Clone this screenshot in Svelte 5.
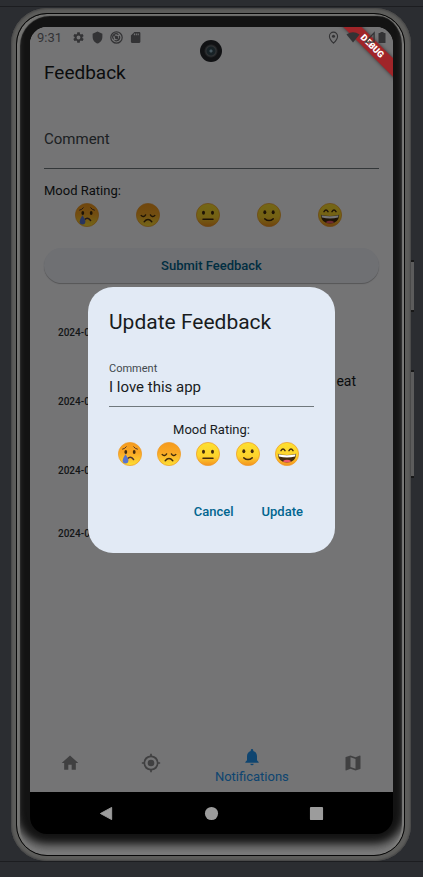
<script>
  const moods = ['crying', 'disappointed', 'neutral', 'smiling', 'grinning'];
  const entries = [
    { date: '2024-0', text: '' },
    { date: '2024-0', text: 'eat' },
    { date: '2024-0', text: '' },
    { date: '2024-0', text: '' }
  ];
  let draft = $state('');
  let comment = $state('I love this app');
</script>

<svelte:head><title>Feedback</title></svelte:head>

{#snippet face(mood, id)}
  <svg class="face" viewBox="0 0 24 24" aria-hidden="true">
    <defs>
      <linearGradient id={id} x1="0" y1="0" x2="0" y2="1">
        {#if mood === 'crying' || mood === 'disappointed'}
          <stop offset="0" stop-color="#f59a1c" />
          <stop offset=".45" stop-color="#f9a825" />
          <stop offset="1" stop-color="#fde034" />
        {:else}
          <stop offset="0" stop-color="#fde030" />
          <stop offset=".6" stop-color="#fdd32c" />
          <stop offset="1" stop-color="#f4921f" />
        {/if}
      </linearGradient>
    </defs>
    <circle cx="12" cy="12" r="11.6" fill="url(#{id})" stroke="#ee9a28" stroke-width=".7" />
    {#if mood === 'crying'}
      <g fill="none" stroke="#4e342e" stroke-linecap="round">
        <path d="M4.6 7.2Q7 6.8 8.3 4.8M15.7 4.8Q17 6.8 19.4 7.2" stroke-width="1" />
        <path d="M8.8 17.6Q12 13.2 15.6 17.4" stroke-width="1.5" />
      </g>
      <ellipse cx="7.8" cy="10" rx="1.4" ry="1.9" fill="#422b0d" />
      <ellipse cx="16.2" cy="10" rx="1.4" ry="1.9" fill="#422b0d" />
      <path d="M7.4 12.2Q10.5 16.5 10.4 18.6A2.9 2.9 0 0 1 4.6 18.6Q4.7 16.5 7.4 12.2Z" fill="#5874ce" />
    {:else if mood === 'disappointed'}
      <g fill="none" stroke="#422b0d" stroke-width="1.4" stroke-linecap="round">
        <path d="M5.2 12.5Q8 14.8 9.6 11.9M14.4 11.9Q16 14.8 18.8 12.5" />
        <path d="M8.2 18.7Q12 14.3 15.8 18.7" />
      </g>
    {:else if mood === 'neutral'}
      <ellipse cx="7.5" cy="9.7" rx="1.5" ry="2" fill="#422b0d" />
      <ellipse cx="16.5" cy="9.7" rx="1.5" ry="2" fill="#422b0d" />
      <path d="M7 16.2H17" stroke="#422b0d" stroke-width="1.5" stroke-linecap="round" />
    {:else if mood === 'smiling'}
      <ellipse cx="7.8" cy="9.3" rx="1.5" ry="2" fill="#422b0d" />
      <ellipse cx="16.2" cy="9.3" rx="1.5" ry="2" fill="#422b0d" />
      <path d="M7.8 15.8Q12 19.3 16.2 15.8" fill="none" stroke="#422b0d" stroke-width="1.5" stroke-linecap="round" />
    {:else}
      <path d="M6 8.6Q8 5.6 10 8.6M14 8.6Q16 5.6 18 8.6" fill="none" stroke="#422b0d" stroke-width="1.5" stroke-linecap="round" />
      <path d="M2.8 11.8Q12 14.2 21.2 11.8Q20.5 20.6 12 20.6T2.8 11.8Z" fill="#422b0d" />
      <path d="M3.4 12.3Q12 14.4 20.6 12.3L20 14.6Q12 16.6 4 14.6Z" fill="#fff" />
      <path d="M7.5 19.2Q12 16.3 16.5 19.2Q12 21.7 7.5 19.2Z" fill="#ed5a6b" />
    {/if}
  </svg>
{/snippet}

{#snippet moodRow(prefix)}
  <div class="moods">
    {#each moods as mood}
      <button type="button" class="mood" aria-label={mood}>{@render face(mood, `${prefix}-${mood}`)}</button>
    {/each}
  </div>
{/snippet}

<div class="desk">
  <div class="phone">
    <span class="key power"></span>
    <span class="key volume"></span>
    <div class="rim">
      <div class="screen">
        <div class="app">
          <header class="status">
            <span class="time">9:31</span>
            <svg viewBox="0 0 24 24"><path d="M19.14 12.94a7 7 0 0 0 0-1.88l2.03-1.58a.5.5 0 0 0 .12-.61l-1.92-3.32a.5.5 0 0 0-.59-.22l-2.39.96a7 7 0 0 0-1.62-.94L14.4 2.81A.48.48 0 0 0 13.93 2.4h-3.84a.48.48 0 0 0-.47.41l-.36 2.54a7 7 0 0 0-1.62.94l-2.39-.96a.5.5 0 0 0-.59.22L2.74 8.87a.48.48 0 0 0 .12.61l2.03 1.58a7 7 0 0 0 0 1.88l-2.03 1.58a.5.5 0 0 0-.12.61l1.92 3.32c.12.22.37.29.59.22l2.39-.96a7 7 0 0 0 1.62.94l.36 2.54c.05.24.24.41.48.41h3.84c.24 0 .44-.17.47-.41l.36-2.54a7 7 0 0 0 1.62-.94l2.39.96c.22.08.47 0 .59-.22l1.92-3.32a.48.48 0 0 0-.12-.61ZM12 15.6A3.6 3.6 0 1 1 12 8.4a3.6 3.6 0 0 1 0 7.2Z" /></svg>
            <svg viewBox="0 0 24 24"><path d="M12 1 3 5v6c0 5.55 3.84 10.74 9 12 5.16-1.26 9-6.45 9-12V5Z" /></svg>
            <svg viewBox="0 0 24 24"><g fill="none" stroke="currentColor" stroke-width="2.2"><circle cx="12" cy="12" r="10.5" /><path d="M7 15.5A6 6 0 0 1 15.5 7M17 9a6 6 0 0 1-8.5 8M8 8l9 9" /><circle cx="12" cy="12" r="2" /></g></svg>
            <svg viewBox="0 0 24 24"><path d="M19 2H10L3.5 8.5V20a2 2 0 0 0 2 2H19a2 2 0 0 0 2-2V4a2 2 0 0 0-2-2Zm-8 6H9V4.5h2Zm3.5 0h-2V4.5h2ZM18 8h-2V4.5h2Z" /></svg>
            <span class="spacer"></span>
            <svg viewBox="0 0 24 24"><path d="M12 2a7.5 7.5 0 0 0-7.5 7.5C4.5 15 12 22.5 12 22.5S19.5 15 19.5 9.5A7.5 7.5 0 0 0 12 2Z" fill="none" stroke="currentColor" stroke-width="2" /><circle cx="12" cy="9.5" r="2.8" /></svg>
            <svg class="wifi" viewBox="0 0 28 24"><path d="M14 22 1 6Q14-3 27 6Z" /></svg>
            <svg class="signal" viewBox="0 0 24 24"><path d="M20.5 3.5v17h-16Z" fill="none" stroke="currentColor" stroke-width="2.4" /></svg>
            <svg class="battery" viewBox="0 0 16 24"><path d="M5 1h6v2h3a1 1 0 0 1 1 1v18a1 1 0 0 1-1 1H2a1 1 0 0 1-1-1V4a1 1 0 0 1 1-1h3Z" /></svg>
          </header>

          <h1>Feedback</h1>

          <main>
            <input class="comment" type="text" placeholder="Comment" aria-label="Comment" bind:value={draft} />
            <p class="caption">Mood Rating:</p>
            {@render moodRow('page')}
            <button type="button" class="submit">Submit Feedback</button>
            <ul>
              {#each entries as entry}
                <li><span>{entry.date}</span><b>{entry.text}</b></li>
              {/each}
            </ul>
          </main>

          <nav class="tabs">
            <button type="button" aria-label="Home"><svg viewBox="0 0 24 24"><path d="M10 20v-6h4v6h5v-8h3L12 3 2 12h3v8Z" /></svg></button>
            <button type="button" aria-label="Location"><svg viewBox="0 0 24 24"><path d="M12 8a4 4 0 1 0 0 8 4 4 0 0 0 0-8Zm8.94 3A9 9 0 0 0 13 3.06V1h-2v2.06A9 9 0 0 0 3.06 11H1v2h2.06A9 9 0 0 0 11 20.94V23h2v-2.06A9 9 0 0 0 20.94 13H23v-2ZM12 19a7 7 0 1 1 0-14 7 7 0 0 1 0 14Z" /></svg></button>
            <button type="button" class="active"><svg viewBox="0 0 24 24"><path d="M12 22a2 2 0 0 0 2-2h-4a2 2 0 0 0 2 2Zm6-6v-5c0-3.07-1.64-5.64-4.5-6.32V4a1.5 1.5 0 0 0-3 0v.68C7.63 5.36 6 7.92 6 11v5l-2 2v1h16v-1Z" /></svg>Notifications</button>
            <button type="button" aria-label="Map"><svg viewBox="0 0 24 24"><path d="M20.5 3l-.16.03L15 5.1 9 3 3.36 4.9a.5.5 0 0 0-.36.48V20.5a.5.5 0 0 0 .66.47L9 18.9l6 2.1 5.64-1.9a.5.5 0 0 0 .36-.48V3.5a.5.5 0 0 0-.5-.5ZM15 19l-6-2.11V5l6 2.11Z" /></svg></button>
          </nav>

          <div class="scrim">
            <form class="dialog" role="dialog" aria-labelledby="dialog-title" onsubmit={(e) => e.preventDefault()}>
              <h2 id="dialog-title">Update Feedback</h2>
              <label for="edit-comment">Comment</label>
              <input id="edit-comment" type="text" bind:value={comment} />
              <p class="caption">Mood Rating:</p>
              {@render moodRow('dialog')}
              <div class="actions">
                <button type="button">Cancel</button>
                <button type="submit">Update</button>
              </div>
            </form>
          </div>
        </div>

        <div class="system">
          <button type="button" aria-label="Back"><svg viewBox="0 0 16 16"><path d="M13.5 1.5v13L1.5 8Z" stroke="currentColor" stroke-width="1" stroke-linejoin="round" /></svg></button>
          <button type="button" aria-label="Home screen"><svg viewBox="0 0 16 16"><circle cx="8" cy="8" r="7" /></svg></button>
          <button type="button" aria-label="Overview"><svg viewBox="0 0 16 16"><rect x="1" y="1" width="14" height="14" rx="1" /></svg></button>
        </div>
        <span class="camera"></span>
        <span class="debug">DEBUG</span>
      </div>
    </div>
  </div>
</div>

<style>
  :global(body) {
    margin: 0;
    background: #2b2d31;
  }

  .desk {
    box-sizing: border-box;
    display: flex;
    min-height: 100vh;
    padding: 8px 12px 16px 11px;
    font-family: Roboto, "Liberation Sans", sans-serif;
    background:
      linear-gradient(#1c1d20, #1c1d20) 0 6px / 100% 1px no-repeat,
      linear-gradient(#1c1d20, #1c1d20) 0 calc(100% - 15px) / 100% 1px no-repeat,
      #2b2d31;
  }

  .phone {
    position: relative;
    flex: 1;
    display: flex;
    padding: 5px 6px 5px 5px;
    border-radius: 36px;
    background: #5d5d5b;
    box-shadow: inset 0 0 2px 1px #454545;
  }

  .rim {
    flex: 1;
    display: flex;
    box-sizing: border-box;
    min-width: 0;
    padding: 13px 11px 21px 13px;
    border: 1px solid #080808;
    border-radius: 31px;
    background: #131313;
    box-shadow:
      inset 3px 2px 1px #747472,
      inset -2px 0 1px #7c7c7a,
      inset 0 -3px 3px #7a7a7a,
      inset 0 -12px 9px -1px #767676;
  }

  .key {
    position: absolute;
    left: 100%;
    box-sizing: border-box;
    width: 3px;
    border: solid #181818;
    border-width: 2px 0;
    background: #5c5c5c;
  }
  .power { top: 252px; height: 52px; }
  .volume { top: 362px; height: 108px; }

  .screen {
    position: relative;
    flex: 1;
    display: flex;
    flex-direction: column;
    min-width: 0;
    overflow: hidden;
    border-radius: 17px;
    background: #000;
  }

  .app {
    position: relative;
    flex: 1;
    display: flex;
    flex-direction: column;
    background: #fcfcff;
    color: #191c1e;
  }

  button, input {
    font-family: inherit;
    margin: 0;
  }
  button {
    padding: 0;
    border: 0;
    background: none;
  }
  svg {
    display: block;
    fill: currentColor;
  }

  .status {
    position: relative;
    z-index: 3;
    display: flex;
    align-items: center;
    height: 21px;
    padding: 0 7px;
    color: #333335;
    font-size: 13px;
  }
  .status svg {
    width: 13px;
    height: 13px;
    margin-left: 6px;
  }
  .status .time { margin-right: 4px; }
  .status .wifi { width: 14px; }
  .status .signal { margin-left: 3px; }
  .status .battery { width: 8px; margin-left: 2px; }
  .spacer { flex: 1; }

  h1 {
    margin: 0;
    padding: 0 14px;
    font-size: 19px;
    font-weight: 400;
    line-height: 49px;
  }

  main {
    flex: 1;
    padding: 21px 14px 0;
  }
  .comment, #edit-comment {
    display: block;
    box-sizing: border-box;
    width: 100%;
    padding: 0;
    border: 0;
    border-bottom: 1px solid #70787d;
    border-radius: 0;
    outline: 0;
    background: none;
    color: #191c1e;
    font-size: 15px;
  }
  .comment {
    height: 51px;
    padding-bottom: 8px;
  }
  .comment::placeholder {
    color: #41484d;
    opacity: 1;
  }
  .caption {
    margin: 0;
    font-size: 13px;
    line-height: 16px;
  }
  main .caption { margin-top: 14px; }

  .moods {
    display: flex;
    justify-content: space-evenly;
    padding-top: 4px;
  }
  .mood { width: 30px; }
  .face {
    width: 24px;
    height: 24px;
  }

  .submit {
    display: block;
    width: 100%;
    height: 35px;
    margin-top: 21px;
    border-radius: 18px;
    background: #f1f4fb;
    box-shadow: 0 1px 1px #0004;
    color: #00658f;
    font-size: 13px;
    font-weight: 500;
  }

  ul {
    margin: 15px 0 0;
    padding: 0 23px 0 14px;
    list-style: none;
  }
  li {
    display: flex;
    justify-content: space-between;
    align-items: center;
    height: 69px;
    font-size: 10px;
    font-weight: 500;
  }
  li:last-child { height: 57px; }
  li span { color: #2c3236; }
  li b {
    height: 57px;
    font-size: 14px;
    font-weight: 400;
  }

  .tabs {
    display: flex;
    height: 52px;
    padding-bottom: 3px;
    color: #8c8c8e;
  }
  .tabs button {
    flex: 2;
    display: flex;
    flex-direction: column;
    align-items: center;
    justify-content: center;
    color: inherit;
    font-size: 13px;
    line-height: 16px;
  }
  .tabs .active {
    flex: 3;
    gap: 2px;
    padding-top: 6px;
    color: #2196f3;
  }
  .tabs svg { width: 20px; height: 20px; }

  .scrim {
    position: absolute;
    inset: 0;
    display: flex;
    align-items: center;
    padding: 21px 58px 0;
    background: #0000008a;
  }
  .dialog {
    flex: 1;
    min-width: 0;
    padding: 21px 21px 28px;
    border-radius: 25px;
    background: #e2eaf5;
  }
  h2 {
    margin: 0;
    font-size: 21px;
    font-weight: 400;
    line-height: 28px;
  }
  label {
    display: block;
    margin-top: 26px;
    color: #41484d;
    font-size: 11px;
    line-height: 14px;
  }
  #edit-comment {
    height: 31px;
    padding-bottom: 8px;
  }
  .dialog .caption {
    margin-top: 15px;
    text-align: center;
  }
  .actions {
    display: flex;
    justify-content: flex-end;
    gap: 28px;
    padding: 31px 11px 0 0;
  }
  .actions button {
    height: 28px;
    color: #00658f;
    font-size: 13px;
    font-weight: 500;
  }

  .system {
    display: flex;
    justify-content: center;
    height: 42px;
    color: #9c9c9c;
  }
  .system button {
    display: flex;
    align-items: center;
    justify-content: center;
    width: 105px;
    color: inherit;
  }
  .system svg { width: 15px; height: 15px; }

  .camera {
    position: absolute;
    z-index: 4;
    top: 13px;
    left: 50%;
    width: 22px;
    height: 22px;
    margin-left: -12px;
    border-radius: 50%;
    background: radial-gradient(circle, #46565e 0 1px, #182226 2px 4px, #303234 5px, #111214 7px);
  }

  .debug {
    position: absolute;
    z-index: 2;
    top: 13px;
    right: -19px;
    width: 80px;
    height: 13px;
    transform: rotate(45deg);
    background: #a02529;
    box-shadow: 0 0 4px #0008;
    color: #fff;
    font-size: 9px;
    font-weight: 900;
    line-height: 13px;
    text-align: center;
  }
</style>
